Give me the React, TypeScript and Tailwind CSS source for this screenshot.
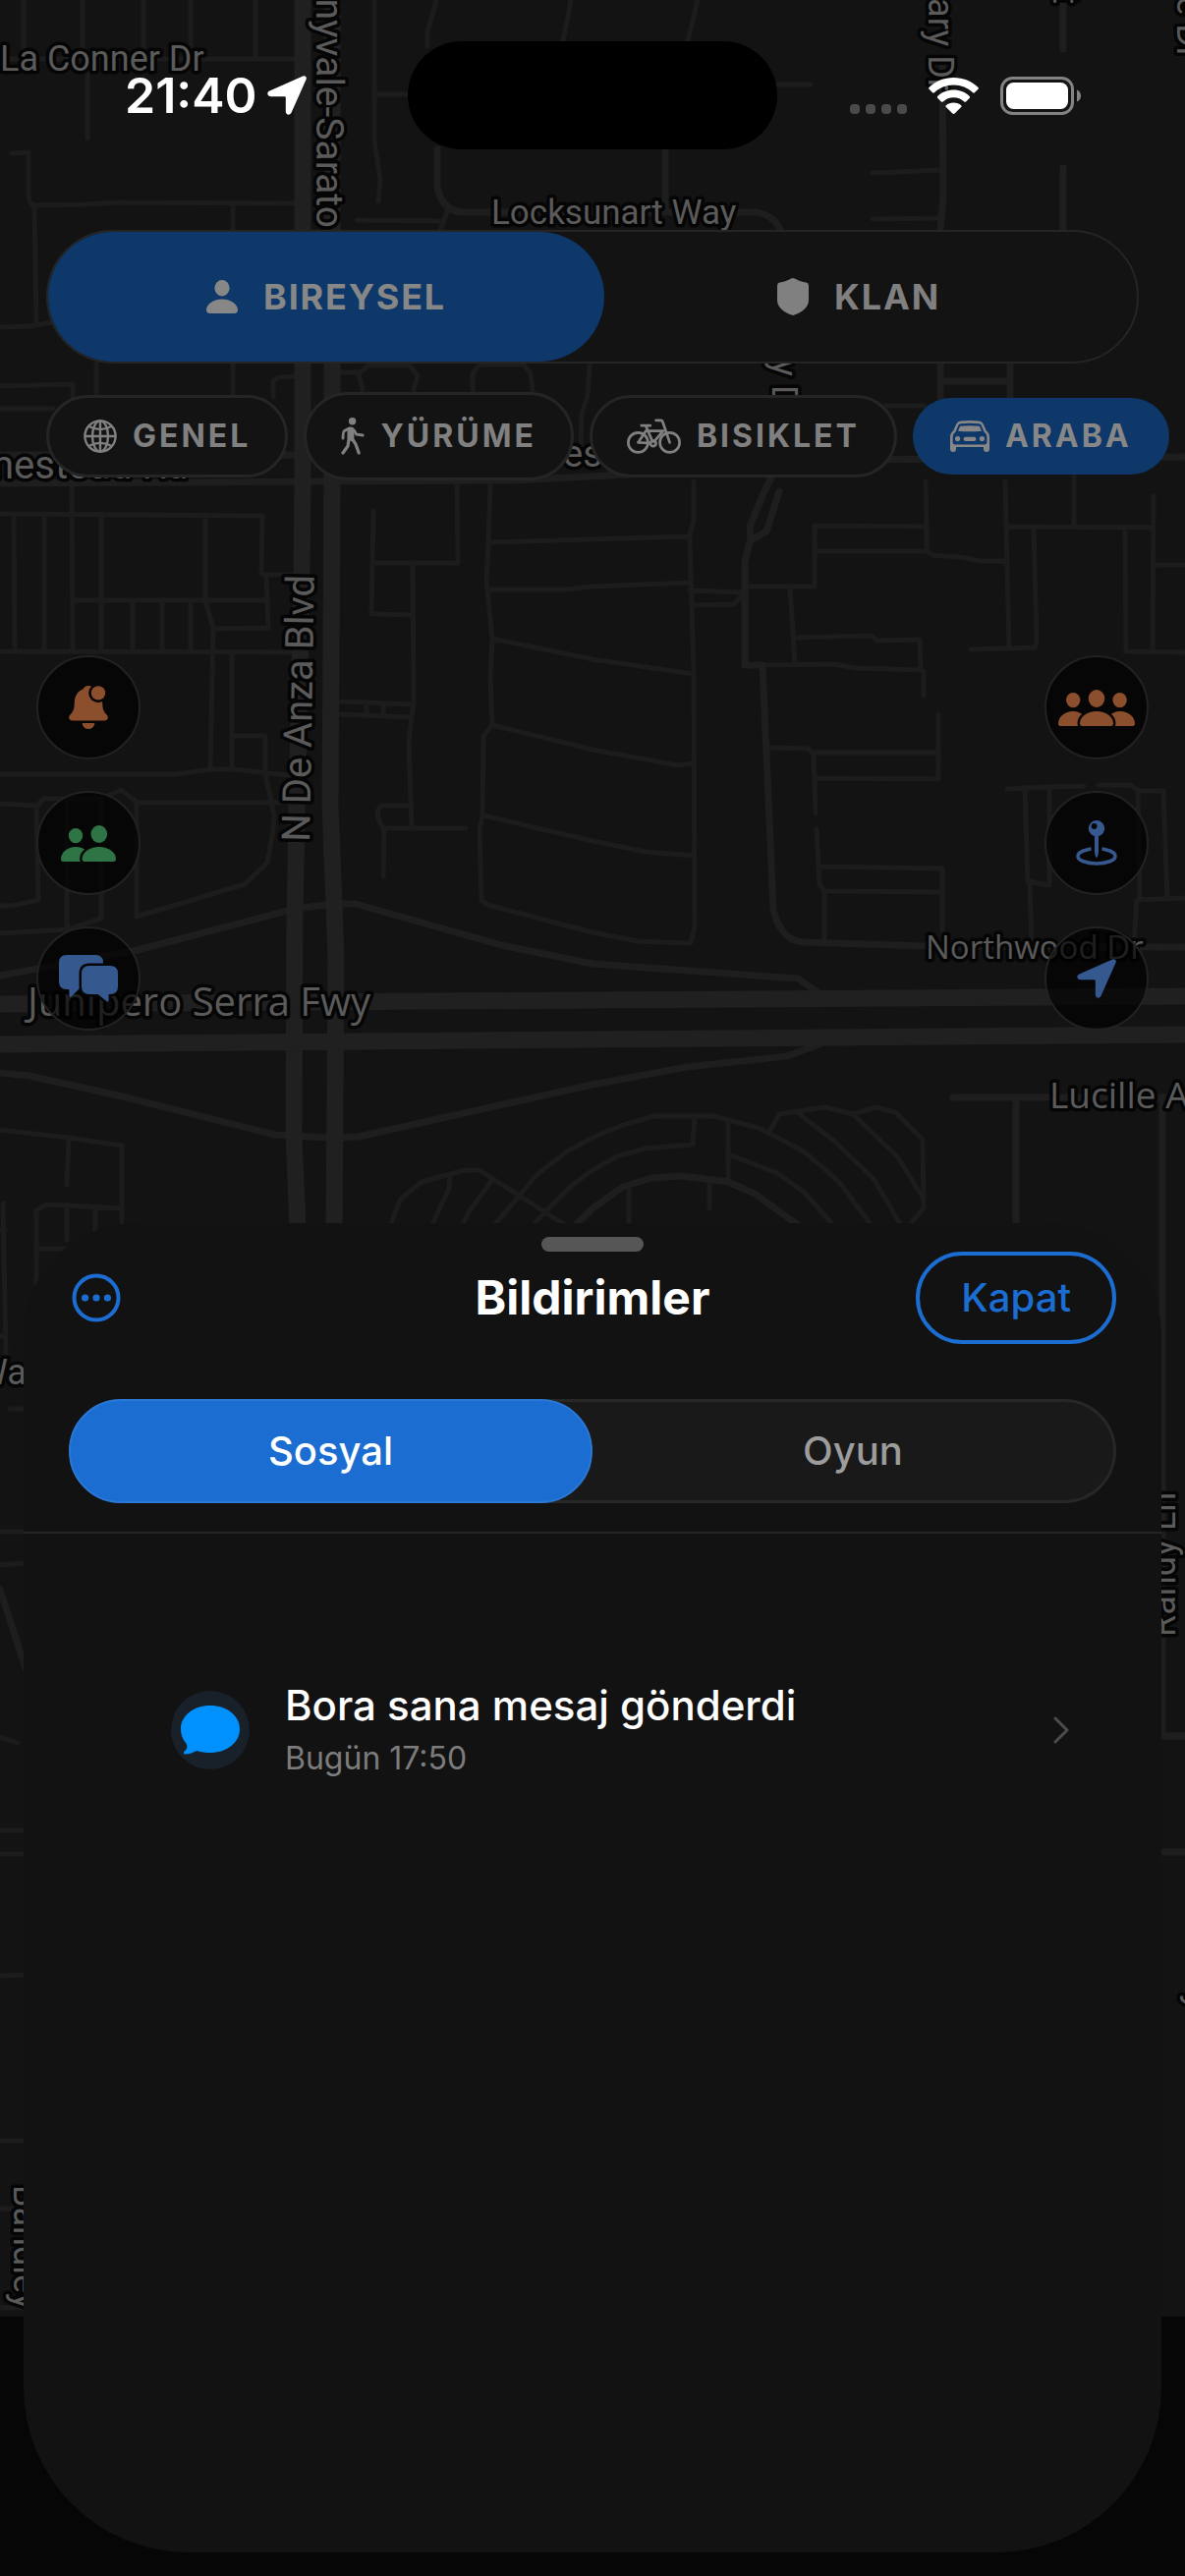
import React from 'react'

// ---------- map ----------

const THICK = [
    'M308 0V500L307 584L302 830L300 932L299 1155L303 1250',
    'M338 0V500L336 820L340 920L342 980L340 1250',
    'M0 1022L603 1018L1206 1014',
    'M0 1063L603 1058L1206 1053',
]

const MEDIUM = [
    'M0 492L520 489L700 480L860 468L1206 465',
    'M0 463H300',
    'M0 993L140 967L300 925L340 920H362L510 962L603 981L812 996L832 1010',
    'M0 1092L30 1095L120 1115L280 1155L332 1158L365 1157L603 1104L699 1086L801 1075L834 1063',
    'M788 480L778 500L763 536L764 548L758 572V677H776L787 926Q795 958 818 959L941 963L1206 964',
    'M793 500L780 541L764 550',
    'M959 60L960 200L957 234V404M1028 370V404M957 388H1028',
    'M1082 0V50M1082 171V234',
    'M445 152V190Q450 216 473 216H768Q788 218 795 236M677 152V216',
    'M970 1117H1206M1034 1117V1250M1183 1117V1767H1206M1182 1885H1206',
    'M585 1248L603 1230L634 1208L663 1199L693 1197L741 1203L768 1215L811 1246',
    'M0 1618L26 1698',
]

const THIN = [
    'M24 0V60M84 0V60M146 0V50M194 0V60M260 0V60M0 60H300M89 60V141',
    'M12 156L29 155V200Q30 209 37 209L88 208L119 206L300 207M35 209L37 330M0 333L31 332L54 328M237 207V400',
    'M0 393L74 391V404M98 370V402M0 416H54M300 383L284 384L278 388V404',
    'M381 0V143L387 183L385 205M381 96H415M444 0L435 33V47M363 224L446 225M456 213L448 234M581 0L573 42M710 0L700 42M791 86H825',
    'M346 379H365M369 397L365 380L375 372H417L425 382L421 397M481 397V380L488 371H533L540 380L542 398M600 370L598 403L592 420L591 457',
    'M888 176L957 173M888 223L957 222M901 413H941M1093 485V536M465 490L466 573H379',
    'M0 523L133 524L267 525L266 584L271 585H299M271 585L273 639L217 640',
    'M14 523L15 663M45 523V663M73 490L74 663M103 523V663M74 611H271M135 611V663M165 611V663M194 611V663M0 663L300 664',
    'M209 524V612L217 639L214 782M236 664V782M236 749H270V787L279 830L278 845L272 878L249 900L139 933V817',
    'M0 788H179L215 783H238L294 789M139 817H294M112 809L123 804L139 816',
    'M0 818L37 820L39 916L12 922H0M38 820L44 813H103V935L69 946L0 950M68 813V945',
    'M0 1150L70 1158L124 1166V1250M70 1158L68 1206M124 1230L48 1226L37 1232V1310M68 1226V1262M97 1228V1262M37 1271H70M3 1225L6 1380M0 1252H5M0 1360H6',
    'M380 520L378 625L420 626M420 573L421 715L416 754L419 842M346 714L420 717M346 727L418 730M373 716V728M390 716V728',
    'M419 820H388Q380 828 390 843H474M391 843L390 892',
    'M499 490L497 553L495 591L501 651L499 689L501 738L492 749L491 830L488 845L490 916L496 921L603 949L649 958L703 960L707 943L706 687L704 615L702 545L706 529V490',
    'M497 552L700 546M496 600H577L603 597L703 593M501 650L603 671L706 686M501 738L603 763L690 779L706 777M492 830L603 856L657 867L706 871',
    'M396 1250L408 1220L429 1203L473 1191H488L580 1250M458 1196L457 1210L440 1246M500 1202L477 1234L471 1246',
    'M504 1246L546 1196L577 1172L603 1158L634 1145L666 1136H726L772 1148L818 1172L853 1202L886 1246',
    'M543 1246L580 1208L603 1191L628 1177L657 1169L705 1165L707 1136M741 1141V1203M741 1175L791 1194L818 1213L847 1246M640 1208V1246M722 1203V1230',
    'M784 1150L793 1134L840 1127L868 1134L891 1127L911 1132L939 1160L940 1230L926 1246M811 1132L851 1163L890 1201L916 1246M868 1134L913 1177L940 1220',
    'M702 601L755 603M704 616L747 615L756 605M763 597H829V535L943 536L942 490M829 561H943L949 565L976 567L999 571H1024M943 536V561',
    'M804 598L809 676M809 649L886 647L893 652L936 651L937 682L940 683V708M776 677L849 676L870 680L937 682',
    'M784 761L823 762L828 768L830 828M828 766H955M955 727V793L830 792M831 844L834 900L839 907V957M834 882L959 884V957M839 907L960 908',
    'M1023 490L1024 536L1027 659M988 661L1053 659L1055 653L1052 536M1024 536L1174 537M1174 505L1173 664M1145 537L1146 663L1206 664M1174 575H1206',
    'M1025 803L1068 801L1103 800M1118 799H1151L1159 805H1184L1188 914M1043 801L1046 897L1068 901V801M1048 901L1050 959M1158 805L1160 916M1206 914L1157 916L1154 959',
    'M10 1434H26M0 1559H26M0 1593L26 1591M0 1768L18 1774M0 1863H26M0 1887H26M0 2011L26 2010M0 2179H26M0 2248H26M0 2349H26',
]

const DIN = 'Roboto, "Liberation Sans", sans-serif'
const NUNITO = '"Open Sans", "Noto Sans", sans-serif'

const LABELS = [
    { text: 'La Conner Dr', x: 0, y: 72, size: 36, font: DIN },
    { text: 'Locksunart Way', x: 500, y: 228, size: 35, font: DIN },
    { text: 'nyvale-Sarato', x: 322, y: 232, size: 39, font: DIN, rotate: 90, anchor: 'end' },
    { text: 'ary Dr', x: 945, y: 92, size: 36, font: DIN, rotate: 90, anchor: 'end' },
    { text: 't', x: 1072, y: 4, size: 36, font: DIN, rotate: 90, anchor: 'end' },
    { text: 'e Dr', x: 1198, y: 60, size: 36, font: DIN, rotate: 90, anchor: 'end' },
    { text: 'y Dr', x: 786, y: 366, size: 36, font: DIN, rotate: 90 },
    { text: 'mestead Rd', x: -21, y: 487, size: 40, font: DIN },
    { text: 'es', x: 573, y: 475, size: 38, font: DIN },
    { text: 'N De Anza Blvd', x: 315, y: 857, size: 40, font: DIN, rotate: -89 },
    { text: 'Junipero Serra Fwy', x: 28, y: 1034, size: 40, font: NUNITO },
    { text: 'Northwood Dr', x: 942, y: 976, size: 33, font: NUNITO },
    { text: 'Lucille Av', x: 1068, y: 1128, size: 37, font: NUNITO },
    { text: 'Wa', x: -24, y: 1409, size: 36, font: DIN },
    { text: 'Randy Ln', x: 1196, y: 1666, size: 36, font: DIN, rotate: -90 },
    { text: 'Bandley', x: 14, y: 2224, size: 36, font: DIN, rotate: 90 },
    { text: 'y', x: 1209, y: 2030, size: 36, font: DIN, rotate: 90 },
]

function MapCanvas() {
    return (
        <svg
            className="absolute inset-0 h-full w-full"
            viewBox="0 0 1206 2622"
            preserveAspectRatio="xMidYMin slice"
            aria-hidden="true"
        >
            <rect width="1206" height="2358" fill="#131313" />
            <g fill="none" strokeLinejoin="round" strokeLinecap="round">
                <path d={THIN.join('')} stroke="#1c1c1c" strokeWidth="5" />
                <path d={MEDIUM.join('')} stroke="#1e1e1e" strokeWidth="7" />
                <path d={THICK.join('')} stroke="#202020" strokeWidth="17" />
            </g>
            <g fill="#5a5a5a" stroke="#050505" strokeWidth="7" strokeLinejoin="round" paintOrder="stroke">
                {LABELS.map((l, i) => (
                    <text
                        key={i}
                        transform={`translate(${l.x} ${l.y}) rotate(${l.rotate ?? 0})`}
                        fontSize={l.size}
                        fontFamily={l.font}
                        textAnchor={l.anchor === 'end' ? 'end' : 'start'}
                    >
                        {l.text}
                    </text>
                ))}
            </g>
        </svg>
    )
}

// ---------- icons ----------

function ArrowIcon({ className }: { className: string }) {
    return (
        <svg viewBox="0 0 40 40" className={className} fill="currentColor" aria-hidden="true">
            <path d="M36.200 .4C38.600-.6 40.600 1.400 39.600 3.800L24.600 37.600C23.200 40.800 18.800 40.200 18.800 36.600V22.200Q18.800 21.200 17.800 21.200H3.400C-.2 21.200-.8 16.800 2.400 15.400Z" />
        </svg>
    )
}

function PersonIcon() {
    return (
        <svg viewBox="0 0 32 34" className="h-[34px] w-8" fill="currentColor" aria-hidden="true">
            <ellipse cx="16" cy="8.200" rx="7.600" ry="8.200" />
            <path d="M3.600 34C1.200 34 0 32.600 0 30.600C0 25.600 6 19.600 16 19.600S32 25.600 32 30.600C32 32.600 30.800 34 28.400 34Z" />
        </svg>
    )
}

function ShieldIcon() {
    return (
        <svg viewBox="0 0 32 38" className="h-[38px] w-8" fill="currentColor" aria-hidden="true">
            <path d="M14.200 .6Q16-.4 17.800 .6C20.600 2.400 25.600 4 29.400 4.600Q32 5.200 32 7.800V22.500C32 30.500 24.500 34.800 17.600 37.600Q16 38.300 14.400 37.600C7.500 34.800 0 30.500 0 22.500V7.800Q0 5.200 2.600 4.600C6.400 4 11.400 2.400 14.200 .6Z" />
        </svg>
    )
}

function GlobeIcon() {
    return (
        <svg viewBox="0 0 34 34" className="h-[34px] w-[34px]" fill="none" stroke="currentColor" strokeWidth="2.400" aria-hidden="true">
            <circle cx="17" cy="17" r="15.600" />
            <ellipse cx="17" cy="17" rx="8" ry="15.600" />
            <path d="M17 1.400V32.600M1.400 17H32.600M5 6.800Q17 13.400 29 6.800M5 27.200Q17 20.600 29 27.200" />
        </svg>
    )
}

function WalkIcon() {
    return (
        <svg viewBox="0 -3 24 44" className="h-11 w-6" fill="none" stroke="currentColor" strokeLinecap="round" strokeLinejoin="round" aria-hidden="true">
            <circle cx="11.600" cy="3.800" r="3.700" fill="currentColor" stroke="none" />
            <path d="M6.600 11.400Q7.400 9.600 10 9.600Q13.400 9.600 13.400 12.600V20.500Q13.400 24.400 9.800 23.800Q6.200 23.400 6.400 20Z" fill="currentColor" stroke="none" />
            <path d="M8.200 11L3.200 13.800Q2.200 14.600 2 21.200" strokeWidth="2.800" />
            <path d="M13 12.600L15.800 17.200L22.200 18" strokeWidth="2.800" />
            <path d="M11.600 22L15 27.200L18.200 36" strokeWidth="3.200" />
            <path d="M8 22.500L7 29L2 36" strokeWidth="3.200" />
        </svg>
    )
}

function BikeIcon() {
    return (
        <svg viewBox="0 0 55 36" className="h-9 w-[55px]" fill="none" stroke="currentColor" strokeWidth="2.700" strokeLinecap="round" strokeLinejoin="round" aria-hidden="true">
            <circle cx="11.400" cy="24.400" r="10" />
            <circle cx="43.600" cy="24.400" r="10" />
            <circle cx="26.800" cy="25.400" r="2.800" />
            <path d="M11.400 24.400L19.400 12.600H36.800L27.600 23.600M11.400 24.400L24 25M25.800 22.800L19.200 7.400M14.800 7.200H23.800M29.600 1.800H34.600Q36 1.800 36.400 3.200L43.600 24.400" />
        </svg>
    )
}

function CarIcon() {
    return (
        <svg viewBox="0 0 40 32" className="h-8 w-10" fill="currentColor" aria-hidden="true">
            <path
                fillRule="evenodd"
                d="M10.800 .6Q20-.6 29.200 .6Q32.600 1 33.800 3.800L36.800 10.400Q40 12.600 40 17V29.600Q40 32 37.600 32H36.400Q34 32 34 29.600V27H6V29.600Q6 32 3.600 32H2.400Q0 32 0 29.600V17Q0 12.600 3.200 10.400L6.200 3.800Q7.400 1 10.800 .6ZM10.800 3.200Q9 3.400 8.400 4.800L5.600 11.600Q2.600 13.600 2.600 17V22.200Q2.600 24.400 4.800 24.400H35.200Q37.400 24.400 37.400 22.200V17Q37.400 13.600 34.400 11.600L31.600 4.800Q31 3.400 29.200 3.200Q20 2.200 10.800 3.200Z"
            />
            <path d="M10.200 5.800Q20 4.600 29.800 5.800L32 10.800Q20 11.800 8 10.800Z" />
            <circle cx="7.600" cy="18.600" r="2.600" />
            <circle cx="32.400" cy="18.600" r="2.600" />
            <rect x="13.600" y="16.800" width="12.800" height="4.200" rx="2.100" />
        </svg>
    )
}

function BellIcon() {
    return (
        <svg viewBox="0 0 40 44" className="h-11 w-10" aria-hidden="true">
            <path fill="currentColor" d="M20 0C22.800 0 24.800 1.600 25.400 3.600C31 5.400 34 10.600 34.200 17C34.400 24.400 35.600 26.400 39 30Q40.400 31.800 39.600 33.600Q38.900 35.600 36.400 35.600H3.600Q1.100 35.600 .4 33.600Q-.4 31.800 1 30C4.400 26.400 5.600 24.400 5.800 17C6 10.600 9 5.400 14.600 3.600C15.200 1.600 17.200 0 20 0Z" />
            <path fill="currentColor" d="M13.600 38H26.400Q25.400 44 20 44T13.600 38Z" />
            <circle cx="30" cy="7.400" r="9.800" fill="#060606" />
            <circle cx="30" cy="7.400" r="7.200" fill="currentColor" />
        </svg>
    )
}

function FriendsIcon() {
    return (
        <svg viewBox="0 0 56 37" className="h-[37px] w-14" aria-hidden="true">
            <g fill="currentColor">
                <ellipse cx="15" cy="10.600" rx="7.200" ry="7.600" />
                <path d="M2.600 37Q0 37 0 34.200C0 28 6.600 22 15 22C24 22 30 28 30 34.200V37Z" />
                <ellipse cx="38.800" cy="9" rx="8.300" ry="9" />
            </g>
            <path
                d="M24.600 37Q21.600 37 21.600 34.200C21.600 27.800 28.800 22 38.800 22S56 27.800 56 34.200Q56 37 53 37Z"
                fill="currentColor"
                stroke="#060606"
                strokeWidth="5"
                paintOrder="stroke"
            />
        </svg>
    )
}

function ChatIcon() {
    return (
        <svg viewBox="0 0 60 48" className="h-12 w-[60px]" fill="currentColor" aria-hidden="true">
            <path d="M8 0H37Q45 0 45 8V34H21L13 42Q10.400 44.200 10.400 41V35H8Q0 35 0 27V8Q0 0 8 0Z" />
            <path
                d="M31 11H52Q60 11 60 19V32Q60 40 52 40H50.600V46Q50.600 49 48 46.800L39.600 40H31Q23 40 23 32V19Q23 11 31 11Z"
                stroke="#060606"
                strokeWidth="5"
                paintOrder="stroke"
            />
        </svg>
    )
}

function ClanIcon() {
    return (
        <svg viewBox="0 0 78 37" className="h-[37px] w-[78px]" aria-hidden="true">
            <g fill="currentColor">
                <ellipse cx="15.200" cy="10.600" rx="7.200" ry="7.600" />
                <ellipse cx="62.600" cy="10.600" rx="7.200" ry="7.600" />
                <ellipse cx="39" cy="9" rx="8.300" ry="9" />
                <path d="M2.600 37Q0 37 0 34.200C0 28 6.600 22 15.200 22C23 22 29 28 29 34V37Z" />
                <path d="M75.400 37Q78 37 78 34.200C78 28 71.400 22 62.800 22C55 22 49 28 49 34V37Z" />
            </g>
            <path
                d="M25 37Q22 37 22 34.200C22 27.800 29.200 22 39 22S56 27.800 56 34.200Q56 37 53 37Z"
                fill="currentColor"
                stroke="#060606"
                strokeWidth="5"
                paintOrder="stroke"
            />
        </svg>
    )
}

function PinIcon() {
    return (
        <svg viewBox="0 0 42 46" className="h-[46px] w-[42px]" aria-hidden="true">
            <ellipse cx="21" cy="36.400" rx="19" ry="7.600" fill="none" stroke="currentColor" strokeWidth="3.600" />
            <path d="M15.500 25H26.500V33H15.500Z" fill="#060606" />
            <path d="M19 14H23V32Q22.800 36 21 38.400Q19.200 36 19 32Z" fill="currentColor" />
            <circle cx="21" cy="8.200" r="8.200" fill="currentColor" />
            <circle cx="18.600" cy="6" r="2.900" fill="#060606" />
        </svg>
    )
}

function WifiIcon() {
    return (
        <svg viewBox="0 0 51 37" className="h-[37px] w-[51px]" fill="currentColor" aria-hidden="true">
            <path d="M25.500 0C35.200 0 44 3.700 50.500 9.900Q51.400 10.800 50.500 11.700L46.900 15.300Q46 16.100 45.100 15.300C40 10.500 33 7.600 25.500 7.600S11 10.500 5.900 15.300Q5 16.100 4.100 15.300L.5 11.700Q-.4 10.800 .5 9.900C7 3.700 15.800 0 25.500 0Z" />
            <path d="M25.500 12.600C31.900 12.600 37.600 15 41.800 19Q42.700 19.900 41.800 20.800L38.100 24.400Q37.200 25.200 36.300 24.400C33.400 21.700 29.700 20.200 25.500 20.200S17.600 21.700 14.700 24.400Q13.800 25.200 12.900 24.400L9.200 20.800Q8.300 19.900 9.200 19C13.400 15 19.100 12.600 25.500 12.600Z" />
            <path d="M25.500 25.400C28.600 25.400 31.200 26.400 33.200 28.200Q34.100 29.100 33.200 30L26.600 36.500Q25.500 37.400 24.400 36.500L17.800 30Q16.900 29.100 17.800 28.200C19.800 26.400 22.400 25.400 25.500 25.400Z" />
        </svg>
    )
}

function BatteryIcon() {
    return (
        <svg viewBox="0 0 82 39" className="h-[39px] w-[82px]" aria-hidden="true">
            <rect x="1.500" y="1.500" width="72" height="36" rx="11" fill="none" stroke="#838383" strokeWidth="3" />
            <rect x="6" y="6" width="63" height="27" rx="7.500" fill="#fff" />
            <path d="M78 13.400Q82 15.200 82 19.500T78 25.600Z" fill="#838383" />
        </svg>
    )
}

function BubbleIcon() {
    return (
        <svg viewBox="0 0 60 50" className="h-[50px] w-[60px]" fill="#0091ff" aria-hidden="true">
            <path d="M30 0C47 0 60 10.400 60 24S47 48 30 48C25 48 20.600 47.400 16.400 46C12.600 48 8.600 49.400 4.600 49.400C2.600 49.400 2.400 47.600 3.800 46.600C6.400 44.600 7 41.600 5.600 38.800C2 34.600 0 29.600 0 24C0 10.400 13 0 30 0Z" />
        </svg>
    )
}

// ---------- parts ----------

function StatusBar() {
    return (
        <div className="grid grid-cols-[1fr_376px_1fr] items-center pt-[42px]">
            <div className="flex items-center gap-2.5 pl-[127px] text-white">
                <span className="text-[50px] leading-[60px] font-semibold">21:40</span>
                <ArrowIcon className="h-10 w-10" />
            </div>
            <div className="h-[110px] rounded-full bg-black" />
            <div className="flex items-center justify-end pr-[106px]">
                <div className="mt-7 mr-[22px] flex gap-1.5">
                    {[0, 1, 2, 3].map((i) => (
                        <span key={i} className="h-2.5 w-2.5 rounded-[4px] bg-[#4a4a4a]" />
                    ))}
                </div>
                <span className="mr-[22px] text-white"><WifiIcon /></span>
                <BatteryIcon />
            </div>
        </div>
    )
}

function ModeBtn({ icon, label, active }: any) {
    return (
        <button
            className={`flex flex-1 items-center justify-center gap-[26px] rounded-full text-[36px] leading-[44px] font-bold tracking-wider ${active ? '-mr-6 bg-[#0e3869] text-[#878787]' : 'text-[#808080]'}`}
        >
            {icon}
            <span>{label}</span>
        </button>
    )
}

function FilterChip({ icon, label, active }: any) {
    return (
        <button
            className={`flex shrink-0 items-center gap-4 rounded-full py-5 text-[32px] leading-[38px] font-bold tracking-[3px] ${active ? 'bg-[#0e3869] px-[38px] text-[#878787]' : 'border-3 border-[#252525] bg-[#131313] px-[35px] text-[#808080]'}`}
        >
            {icon}
            <span>{label}</span>
        </button>
    )
}

function MapBtn({ children, color, label }: any) {
    return (
        <button
            aria-label={label}
            className={`flex h-[106px] w-[106px] items-center justify-center rounded-full border-2 border-[#222222] bg-black/65 ${color}`}
        >
            {children}
        </button>
    )
}

function NotificationRow({ icon, title, time }: any) {
    return (
        <li>
            <button className="flex w-full items-center pr-[94px] pl-[150px] text-left">
                <span className="mr-9 flex h-20 w-20 items-center justify-center rounded-full bg-[#18212a]">{icon}</span>
                <span className="flex-1">
                    <span className="block text-[42px] leading-[58px] font-medium text-white">{title}</span>
                    <span className="block text-[32px] leading-[50px] text-[#7c7c7c]">{time}</span>
                </span>
                <svg viewBox="0 0 16 28" className="h-7 w-4" fill="none" stroke="#4c4c4c" strokeWidth="3" strokeLinecap="round" strokeLinejoin="round" aria-hidden="true">
                    <path d="M2 2L14 14L2 26" />
                </svg>
            </button>
        </li>
    )
}

function NotificationSheet() {
    return (
        <section className="mx-6 mt-[196px] mb-6 flex-1 rounded-t-[114px] rounded-b-[168px] bg-[#121212] pt-3.5">
            <div className="mx-auto h-[15px] w-[104px] rounded-full bg-[#565656]" />
            <header className="grid grid-cols-[1fr_auto_1fr] items-center px-[46px]">
                <button aria-label="Menü" className="justify-self-start pl-[3px] text-[#1b6dd1]">
                    <svg viewBox="0 0 50 50" className="h-[50px] w-[50px]" fill="none" stroke="currentColor" strokeWidth="4" aria-hidden="true">
                        <circle cx="25" cy="25" r="22.500" />
                        <g fill="currentColor" stroke="none">
                            <circle cx="13.600" cy="25" r="3.600" />
                            <circle cx="25" cy="25" r="3.600" />
                            <circle cx="36.400" cy="25" r="3.600" />
                        </g>
                    </svg>
                </button>
                <h1 className="text-[48px] leading-[60px] font-bold text-white">Bildirimler</h1>
                <button className="justify-self-end rounded-full border-4 border-[#1b6dd1] px-[42px] py-[19px] text-[40px] leading-[48px] font-medium text-[#1b6dd1]">
                    Kapat
                </button>
            </header>
            <div className="mx-[46px] mt-14 grid h-[106px] grid-cols-2 rounded-full bg-[#191919] text-[40px] font-medium">
                <button className="relative z-10 rounded-full border-2 border-[#2a78d6] bg-[#1b6dd1] text-white">Sosyal</button>
                <button className="-ml-[53px] rounded-r-full border-3 border-l-0 border-[#272727] pl-[53px] text-[#9c9c9c]">Oyun</button>
            </div>
            <div className="mt-[29px] h-0.5 bg-[#242424]" />
            <ul className="pt-[146px]">
                <NotificationRow icon={<BubbleIcon />} title="Bora sana mesaj gönderdi" time="Bugün 17:50" />
            </ul>
        </section>
    )
}

export default function App() {
    return (
        <div className="relative min-h-screen overflow-hidden bg-[#060606] font-['Inter','Liberation_Sans',sans-serif]">
            <MapCanvas />
            <div className="relative flex min-h-screen flex-col">
                <StatusBar />
                <div className="mx-[47px] mt-[82px] flex h-[136px] rounded-full border-2 border-[#252525] bg-[#131313]">
                    <ModeBtn icon={<PersonIcon />} label="BIREYSEL" active />
                    <ModeBtn icon={<ShieldIcon />} label="KLAN" />
                </div>
                <div className="mt-[29px] flex h-[90px] items-center gap-4 overflow-hidden pl-[47px]">
                    <FilterChip icon={<GlobeIcon />} label="GENEL" />
                    <FilterChip icon={<WalkIcon />} label="YÜRÜME" />
                    <FilterChip icon={<BikeIcon />} label="BISIKLET" />
                    <FilterChip icon={<CarIcon />} label="ARABA" active />
                    <span className="h-[84px] w-60 shrink-0 rounded-full border-3 border-[#252525] bg-[#131313]" />
                </div>
                <div className="mt-[178px] flex justify-between px-[37px]">
                    <div className="flex flex-col gap-8">
                        <MapBtn label="Bildirimler" color="text-[#8b4f2d]"><BellIcon /></MapBtn>
                        <MapBtn label="Arkadaşlar" color="text-[#2f7444]"><FriendsIcon /></MapBtn>
                        <MapBtn label="Mesajlar" color="text-[#35588f]"><ChatIcon /></MapBtn>
                    </div>
                    <div className="flex flex-col gap-8">
                        <MapBtn label="Klan" color="text-[#8b4f2d]"><ClanIcon /></MapBtn>
                        <MapBtn label="Pin" color="text-[#35588f]"><PinIcon /></MapBtn>
                        <MapBtn label="Konum" color="text-[#35588f]"><ArrowIcon className="h-10 w-10" /></MapBtn>
                    </div>
                </div>
                <NotificationSheet />
            </div>
        </div>
    )
}
